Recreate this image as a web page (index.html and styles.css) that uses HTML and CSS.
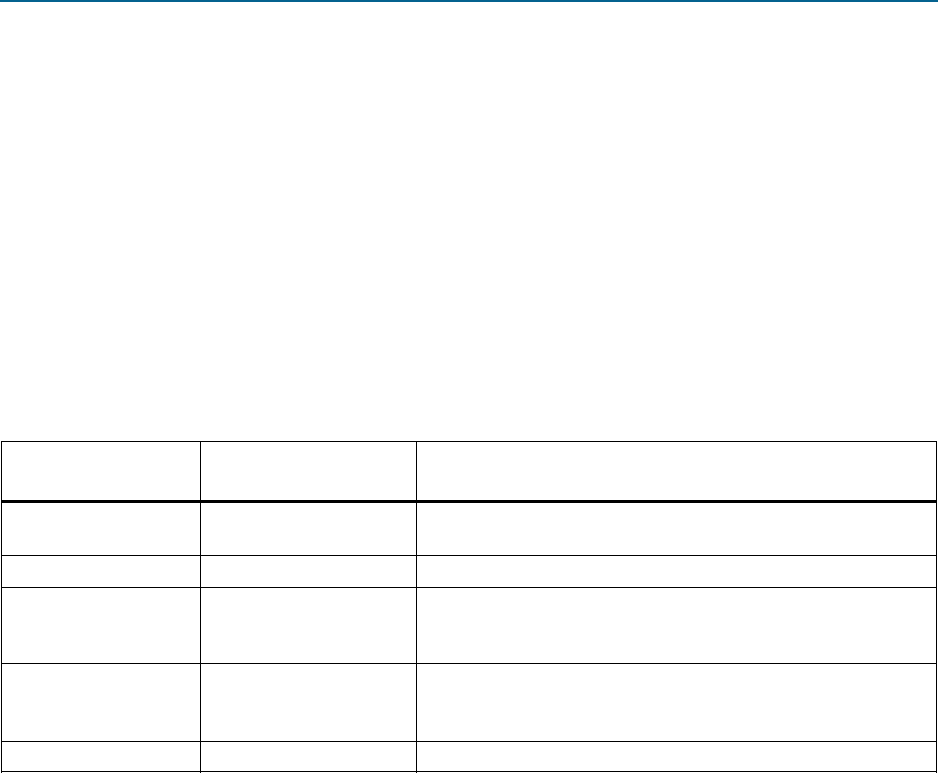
FILE: index.html
```html
<!DOCTYPE html>
<html lang="en">
<head>
<meta charset="utf-8">
<title>Table</title>
<link rel="stylesheet" href="styles.css">
</head>
<body>
<div class="topbar"></div>
<main class="page">
  <div class="grid">
    <div class="cell head"></div><div class="cell head"></div><div class="cell head"></div>
    <div class="cell r1"></div><div class="cell r1"></div><div class="cell r1"></div>
    <div class="cell r2"></div><div class="cell r2"></div><div class="cell r2"></div>
    <div class="cell r3"></div><div class="cell r3"></div><div class="cell r3"></div>
    <div class="cell r4"></div><div class="cell r4"></div><div class="cell r4"></div>
    <div class="cell r5"></div><div class="cell r5"></div><div class="cell r5"></div>
    <div class="cell r6"></div><div class="cell r6"></div><div class="cell r6"></div>
  </div>
</main>
</body>
</html>
```
FILE: styles.css
```css
html, body {
  margin: 0;
  padding: 0;
  background: #ffffff;
  font-family: "Liberation Sans", Arial, sans-serif;
}
.topbar {
  height: 2px;
  background: #04628f;
}
.page {
  padding: 439px 0 0 1px;
}
.grid {
  display: grid;
  grid-template-columns: 199px 216px 520px;
  grid-template-rows: 61px 53px 32px 76px 78px 30px 40px;
  width: 936px;
  box-sizing: border-box;
  border-top: 1px solid #000;
  border-left: 1px solid #000;
}
.cell {
  box-sizing: border-box;
  border-right: 1px solid #000;
  border-bottom: 1px solid #000;
}
.cell.head {
  border-bottom: 3px solid #000;
}
```
